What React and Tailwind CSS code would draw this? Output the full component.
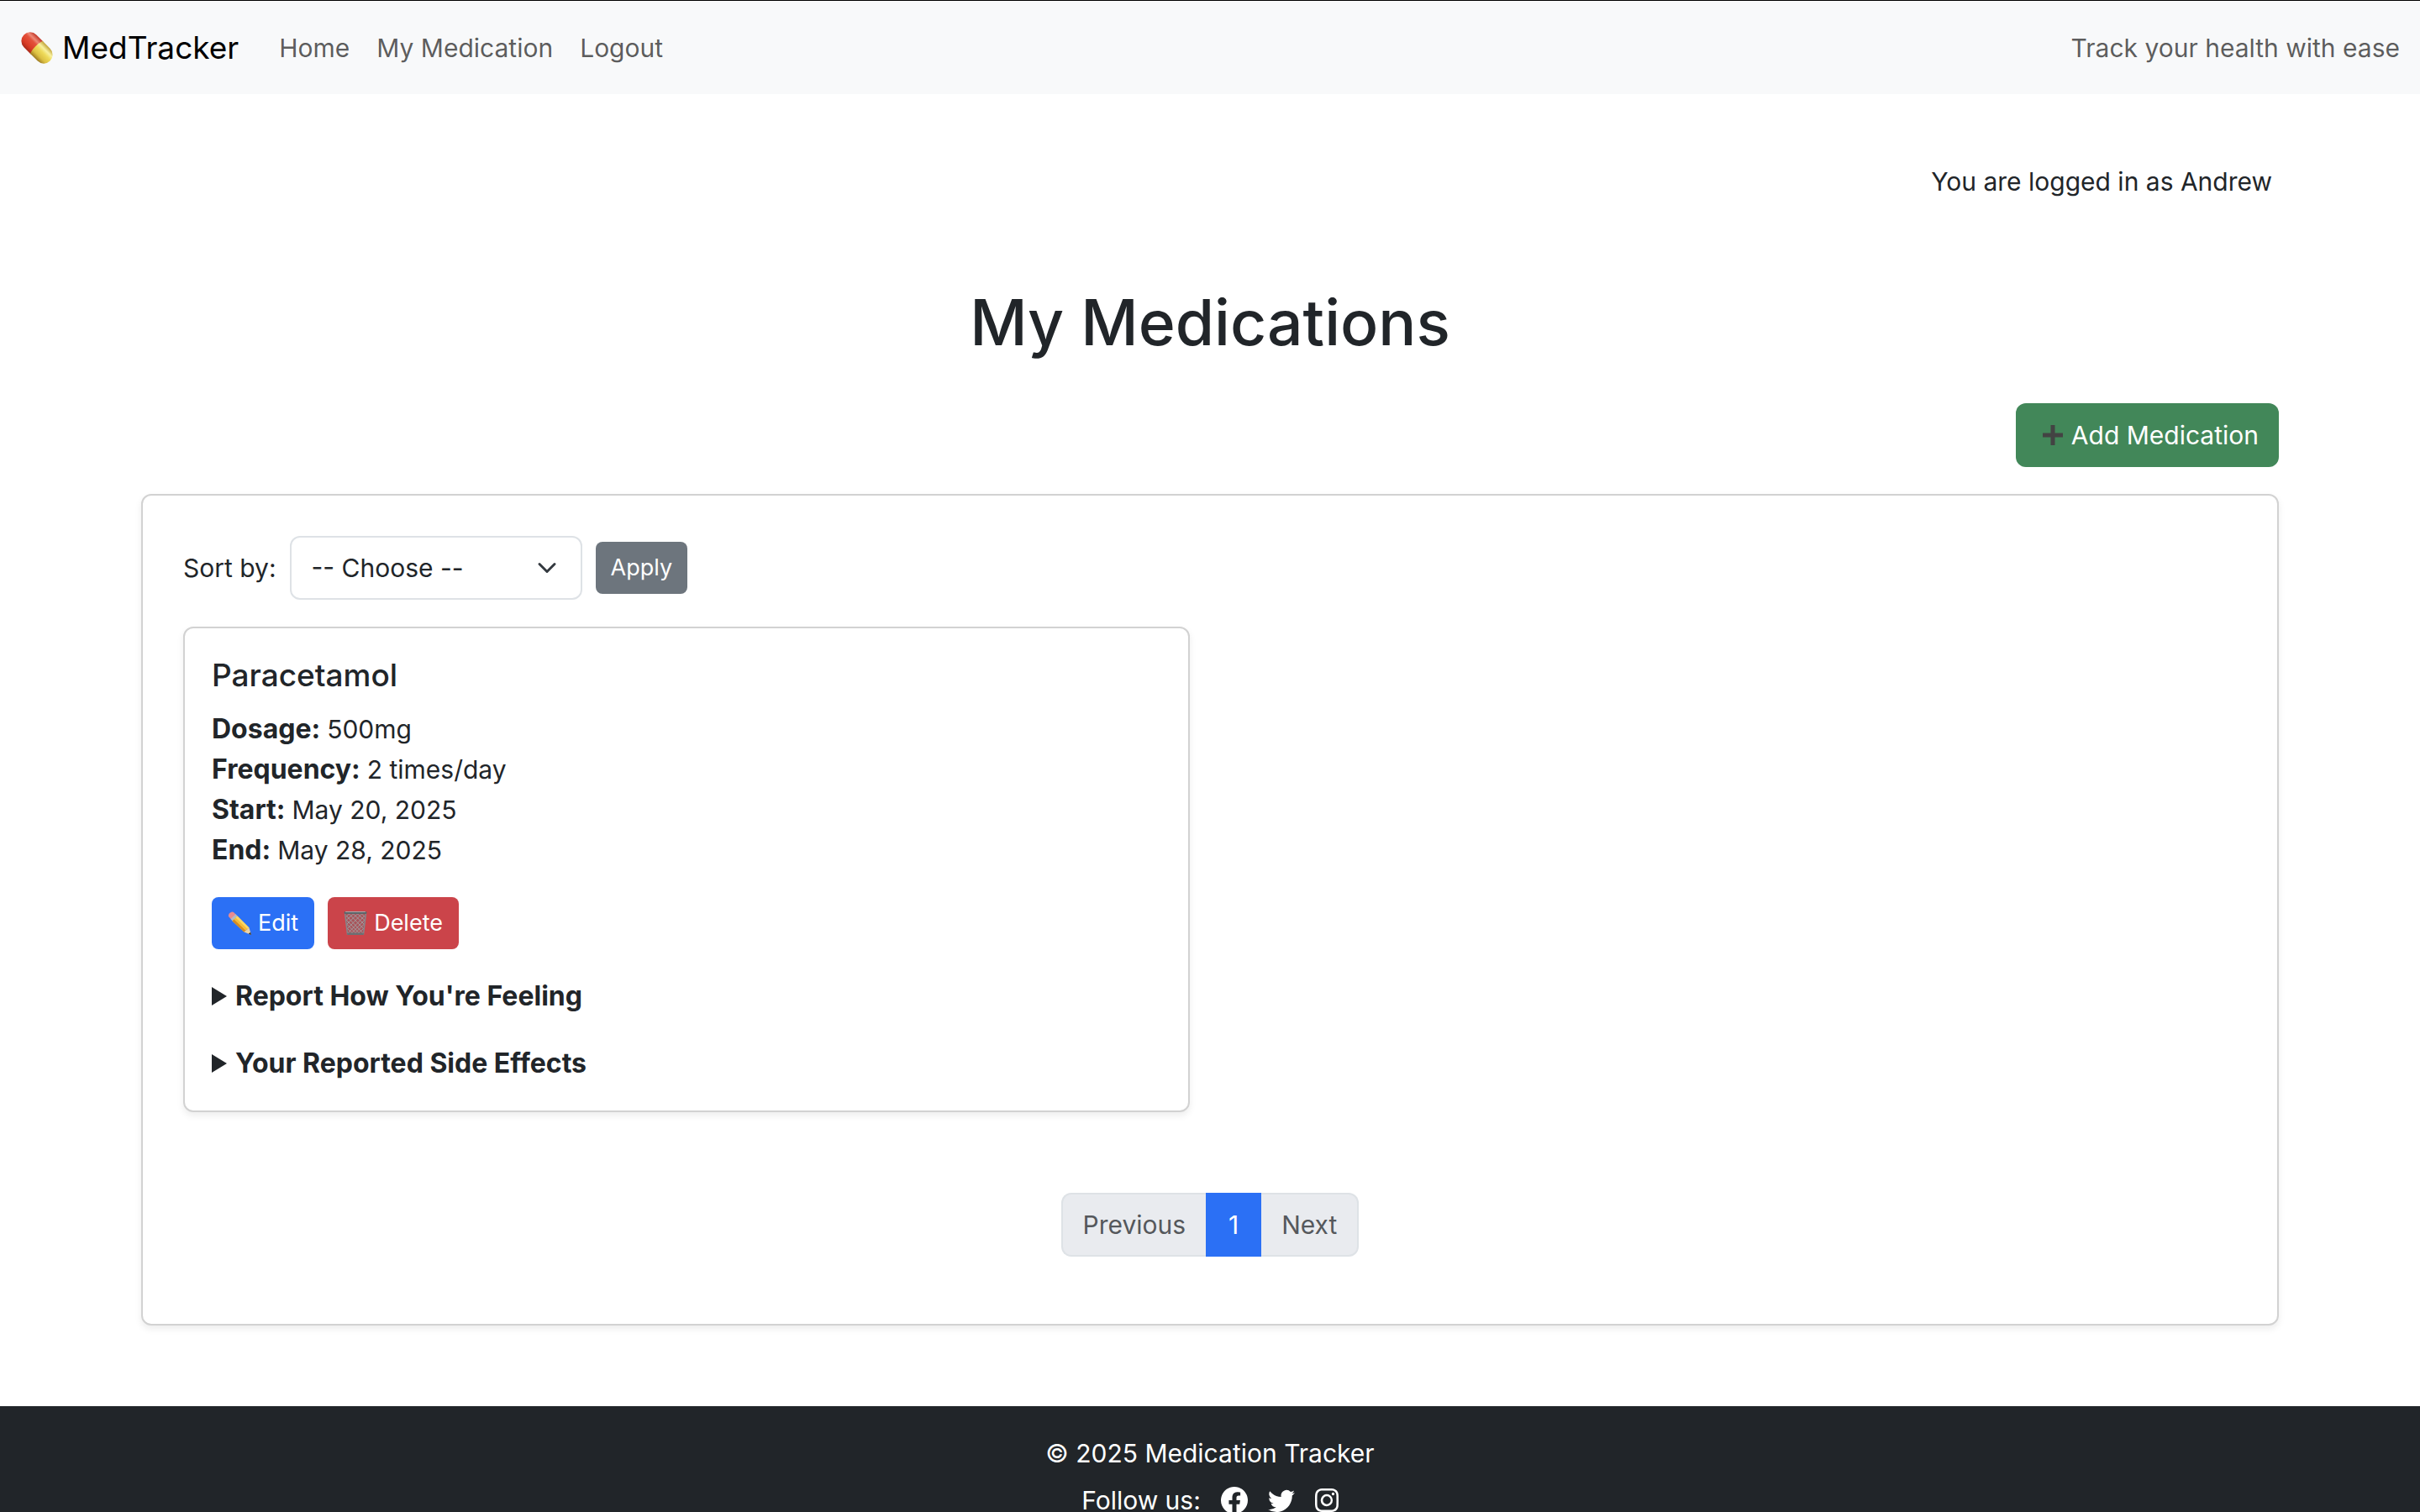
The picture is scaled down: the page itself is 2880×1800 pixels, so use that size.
import { BsFacebook, BsTwitter, BsInstagram } from "react-icons/bs";

function PillIcon() {
  return (
    <svg viewBox="0 0 40 40" className="size-10 shrink-0" aria-hidden="true">
      <defs>
        <linearGradient id="pillRed" x1="0" y1="0" x2="1" y2="0">
          <stop offset="0" stopColor="#a92a1a" />
          <stop offset="0.25" stopColor="#d93c26" />
          <stop offset="0.6" stopColor="#e4523c" />
          <stop offset="0.75" stopColor="#ee8a78" />
          <stop offset="1" stopColor="#c03324" />
        </linearGradient>
        <linearGradient id="pillYellow" x1="0" y1="0" x2="1" y2="0">
          <stop offset="0" stopColor="#9c7a22" />
          <stop offset="0.25" stopColor="#dcc043" />
          <stop offset="0.55" stopColor="#eedb5b" />
          <stop offset="0.75" stopColor="#f8f1a0" />
          <stop offset="1" stopColor="#c0a238" />
        </linearGradient>
      </defs>
      <g transform="rotate(-45 20 20)">
        <path d="M9.5 20V8.500a10.500 10.500 0 0 1 21 0V20z" fill="url(#pillRed)" />
        <path d="M9.500 19q10.500-3 21 0v12.500a10.500 10.500 0 0 1-21 0z" fill="url(#pillYellow)" />
      </g>
    </svg>
  );
}

function PlusIcon() {
  return (
    <svg viewBox="0 0 24 24" className="mr-2.5 ml-2 size-6 shrink-0" aria-hidden="true">
      <path d="M9.5 0h5v9.5H24v5h-9.5V24h-5v-9.5H0v-5h9.5z" fill="#434343" />
    </svg>
  );
}

function PencilIcon() {
  return (
    <svg viewBox="0 0 28 28" className="size-7 shrink-0" aria-hidden="true">
      <path d="M1 6Q.5 3 3 1.500T7 1l3.500 3.500L4.500 10z" fill="#e88b90" />
      <path d="M3.500 9 9.500 3.200 12 6 6 12z" fill="#b4bcc2" />
      <path d="M5.500 11.500 11.500 5.500 25.500 19.500 19.500 24.500z" fill="#f6bd3a" />
      <path d="m9.500 7.500 2-2 14 14-1.700 1.600z" fill="#fbd766" />
      <path d="m5.500 11.500 2-2 14 13.600-2 1.400z" fill="#d58b22" />
      <path d="m19.500 24.500 6-5L28 28z" fill="#ecd2a6" />
      <path d="m24.800 26.700 2.300-2L28 28z" fill="#2e2e2e" />
    </svg>
  );
}

function BinIcon() {
  return (
    <svg viewBox="0 0 28 30" className="h-[30px] w-7 shrink-0" aria-hidden="true">
      <path d="M1.500 2.500 4.500 28h19l3-25.500z" fill="#a8545a" />
      <g stroke="#a39a9d" strokeWidth="1" fill="none">
        <path d="M3 6 23 27M6 3.500 24 22M11 3.500 25 17M16 3.500 25.500 12M21 3.500 26 8M3 11 19 27.500M3.500 16 15 27.500M4 21 11 27.500" />
        <path d="M25 6 5 27M22 3.500 4 22M17 3.500 3 17M12 3.500 2.500 12M7 3.500 2 8M25 11 9 27.500M24.500 16 13 27.500M24 21 17 27.500" />
      </g>
      <path d="M1.500 2.500 4.500 28h19l3-25.500" fill="none" stroke="#85878b" strokeWidth="1.500" />
      <rect x="0.500" y="1" width="27" height="3" rx="1.500" fill="#5f6468" />
      <rect x="2" y="1" width="24" height="1" rx="0.500" fill="#a6a9ac" />
      <rect x="4" y="26.500" width="20" height="2.500" rx="1.200" fill="#6b7074" />
    </svg>
  );
}

function Nav() {
  return (
    <nav className="flex h-28 items-center border-t border-black bg-[#f8f9fa] px-6">
      <a href="#" className="flex items-center gap-2.5 text-[37px] leading-[60px] text-black">
        <PillIcon />
        MedTracker
      </a>
      <div className="ml-12 flex gap-8 text-black/65">
        <a href="#">Home</a>
        <a href="#">My Medication</a>
        <a href="#">Logout</a>
      </div>
      <span className="ml-auto text-black/65">Track your health with ease</span>
    </nav>
  );
}

const details = [
  ["Dosage:", "500mg"],
  ["Frequency:", "2 times/day"],
  ["Start:", "May 20, 2025"],
  ["End:", "May 28, 2025"],
];

function Disclosure({ title, children }) {
  return (
    <details className="mt-8">
      <summary className="flex cursor-pointer list-none items-center gap-2.5 text-[32px] leading-[48px] font-bold">
        <svg viewBox="0 0 18 22" className="h-[22px] w-[18px]" aria-hidden="true">
          <path d="M0 0v22l18-11z" fill="currentColor" />
        </svg>
        {title}
      </summary>
      <p>{children}</p>
    </details>
  );
}

function MedicationCard() {
  return (
    <article className="mt-8 w-[calc(50%-24px)] rounded-xl border-2 border-[#d2d2d2] bg-white p-8 shadow-[0_4px_8px_rgba(0,0,0,0.075)]">
      <h5 className="mb-4 text-[37px] leading-[48px] font-medium">Paracetamol</h5>
      <dl>
        {details.map(([label, value]) => (
          <div key={label} className="flex items-baseline gap-2">
            <dt className="text-[32px] leading-[48px] font-bold">{label}</dt>
            <dd>{value}</dd>
          </div>
        ))}
      </dl>
      <div className="mt-8 flex gap-4 text-[27px] text-white">
        <button className="flex h-[62px] items-center gap-2 rounded-lg bg-[#2b70f5] px-[19px]">
          <PencilIcon />
          Edit
        </button>
        <button className="flex h-[62px] items-center gap-2 rounded-lg bg-[#cb444a] px-[19px]">
          <BinIcon />
          Delete
        </button>
      </div>
      <Disclosure title="Report How You're Feeling" />
      <Disclosure title="Your Reported Side Effects" />
    </article>
  );
}

function Pagination() {
  return (
    <div className="mt-24 mb-8 flex justify-center text-[#55585c]">
      <button className="h-[76px] rounded-l-xl border-2 border-r-0 border-[#dee2e6] bg-[#e9ebef] px-6">Previous</button>
      <button className="h-[76px] w-[66px] bg-[#2b70f5] text-white">1</button>
      <button className="h-[76px] rounded-r-xl border-2 border-l-0 border-[#dee2e6] bg-[#e9ebef] px-6">Next</button>
    </div>
  );
}

export default function App() {
  return (
    <div className="min-h-screen bg-white font-['Inter',sans-serif] text-[30px] leading-[48px] text-[#212529]">
      <Nav />
      <main className="mx-auto w-full max-w-[2640px] px-12">
        <p className="pt-20 pr-2 text-right">You are logged in as Andrew</p>
        <h1 className="mt-24 text-center text-[75px] leading-[96px] font-medium">My Medications</h1>
        <div className="mt-12 flex justify-end">
          <button className="flex h-[76px] items-center rounded-xl bg-[#428759] px-6 text-white">
            <PlusIcon />
            Add Medication
          </button>
        </div>
        <section className="mt-8 rounded-xl border-2 border-[#d2d2d2] bg-white p-12 shadow-[0_4px_8px_rgba(0,0,0,0.075)]">
          <form className="flex items-center gap-4">
            <label htmlFor="sort">Sort by:</label>
            <div className="relative">
              <select
                id="sort"
                className="h-[76px] w-[348px] appearance-none rounded-xl border-2 border-[#dee2e6] bg-white pr-16 pl-6"
              >
                <option>-- Choose --</option>
                <option>Name</option>
                <option>Start date</option>
              </select>
              <svg
                viewBox="0 0 16 16"
                className="pointer-events-none absolute top-[26px] right-[30px] size-6"
                fill="none"
                stroke="#343a40"
                strokeWidth="2"
                strokeLinecap="round"
                strokeLinejoin="round"
                aria-hidden="true"
              >
                <path d="m2 5 6 6 6-6" />
              </svg>
            </div>
            <button type="button" className="h-[62px] rounded-lg bg-[#6d757d] px-[18px] text-[27px] text-white">
              Apply
            </button>
          </form>
          <MedicationCard />
          <Pagination />
        </section>
      </main>
      <footer className="mt-24 bg-[#212529] py-8 text-center text-white">
        <p>© 2025 Medication Tracker</p>
        <div className="mt-2 flex items-center justify-center">
          <span className="mr-6">Follow us:</span>
          <div className="flex items-center gap-6">
            <a href="#" aria-label="Facebook"><BsFacebook className="size-8" /></a>
            <a href="#" aria-label="Twitter"><BsTwitter className="size-8" /></a>
            <a href="#" aria-label="Instagram"><BsInstagram className="size-7" /></a>
          </div>
        </div>
      </footer>
    </div>
  );
}
